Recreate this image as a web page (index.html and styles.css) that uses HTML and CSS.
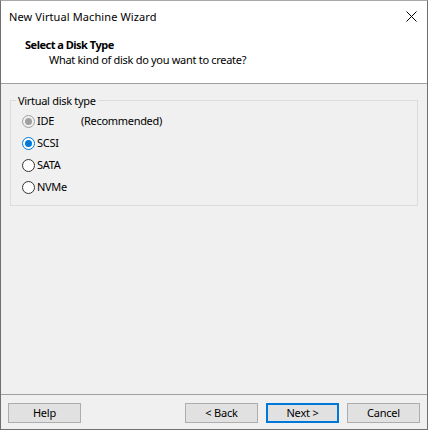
FILE: index.html
```html
<!DOCTYPE html>
<html>
<head>
<meta charset="utf-8">
<link rel="stylesheet" href="styles.css">
</head>
<body>
<div class="window">
  <div class="titlebar">
    <span class="title">New Virtual Machine Wizard</span>
    <svg class="close" width="11" height="11" viewBox="0 0 11 11"><path d="M0.5 0.5 L10.5 10.5 M10.5 0.5 L0.5 10.5" stroke="#000" stroke-width="1" fill="none"/></svg>
  </div>
  <div class="header">
    <div class="heading">Select a Disk Type</div>
    <div class="subheading">What kind of disk do you want to create?</div>
  </div>
  <div class="body">
    <fieldset class="group">
      <legend class="legend">Virtual disk type</legend>
      <div class="row"><span class="radio disabled"></span><span class="label name">IDE</span><span class="label">(Recommended)</span></div>
      <div class="row"><span class="radio checked"></span><span class="label">SCSI</span></div>
      <div class="row"><span class="radio"></span><span class="label">SATA</span></div>
      <div class="row"><span class="radio"></span><span class="label">NVMe</span></div>
    </fieldset>
  </div>
  <div class="footer">
    <button class="btn">Help</button>
    <div class="spacer"></div>
    <button class="btn">&lt; Back</button>
    <button class="btn default">Next &gt;</button>
    <button class="btn">Cancel</button>
  </div>
</div>
</body>
</html>
```
FILE: styles.css
```css
html, body {
  margin: 0;
  padding: 0;
}
body {
  font-family: "Noto Sans", "Open Sans", sans-serif;
  font-size: 11px;
  color: #000;
  background: #f0f0f0;
}
.window {
  width: 428px;
  height: 430px;
  box-sizing: border-box;
  border: 1px solid #6f6f6f;
  border-top-color: #a8a8a8;
  display: flex;
  flex-direction: column;
  background: #f0f0f0;
}
.titlebar {
  height: 30px;
  background: #fff;
  display: flex;
  align-items: center;
  padding-left: 8px;
  padding-right: 10px;
  flex: none;
}
.title {
  flex: 1;
  line-height: 30px;
  padding-top: 1px;
  letter-spacing: 0.1px;
}
.close {
  display: block;
}
.header {
  height: 53px;
  box-sizing: border-box;
  background: #fff;
  border-bottom: 1px solid #a0a0a0;
  padding-top: 6px;
  flex: none;
}
.heading {
  font-weight: bold;
  line-height: 15px;
  padding-left: 24px;
  letter-spacing: -0.5px;
}
.subheading {
  line-height: 15px;
  padding-left: 48px;
  letter-spacing: -0.3px;
}
.body {
  flex: 1;
  padding: 9px 9px 0 9px;
}
.group {
  margin: 0;
  border: 1px solid #dcdcdc;
  padding: 2px 0 7px 0;
  min-width: 0;
  letter-spacing: -0.3px;
}
.legend {
  margin-left: 5px;
  padding: 0 2px;
  line-height: 15px;
}
.row {
  height: 22px;
  display: flex;
  align-items: center;
  padding-left: 11px;
}
.radio {
  width: 13px;
  height: 13px;
  box-sizing: border-box;
  border: 1px solid #333;
  border-radius: 50%;
  background: #fff;
  position: relative;
  flex: none;
}
.radio.checked {
  border-color: #0078d7;
}
.radio.checked::after {
  content: "";
  position: absolute;
  left: 2px;
  top: 2px;
  width: 7px;
  height: 7px;
  border-radius: 50%;
  background: #0078d7;
}
.radio.disabled {
  border-color: #a0a0a0;
  background: #f0f0f0;
}
.radio.disabled::after {
  content: "";
  position: absolute;
  left: 2px;
  top: 2px;
  width: 7px;
  height: 7px;
  border-radius: 50%;
  background: #a0a0a0;
}
.label {
  line-height: 22px;
}
.radio + .label {
  margin-left: 2px;
}
.name {
  display: inline-block;
  width: 44px;
}
.footer {
  height: 35px;
  box-sizing: border-box;
  border-top: 1px solid #a0a0a0;
  padding: 8px 7px 0 7px;
  display: flex;
  align-items: flex-start;
  gap: 8px;
  flex: none;
}
.spacer {
  flex: 1;
}
.btn {
  width: 73px;
  height: 20px;
  box-sizing: border-box;
  border: 1px solid #adadad;
  background: #e1e1e1;
  font-family: "Noto Sans", "Open Sans", sans-serif;
  font-size: 11px;
  letter-spacing: -0.2px;
  color: #000;
  padding: 0;
  line-height: 16px;
  margin: 0;
}
.btn.default {
  border: 2px solid #0078d7;
}
```
